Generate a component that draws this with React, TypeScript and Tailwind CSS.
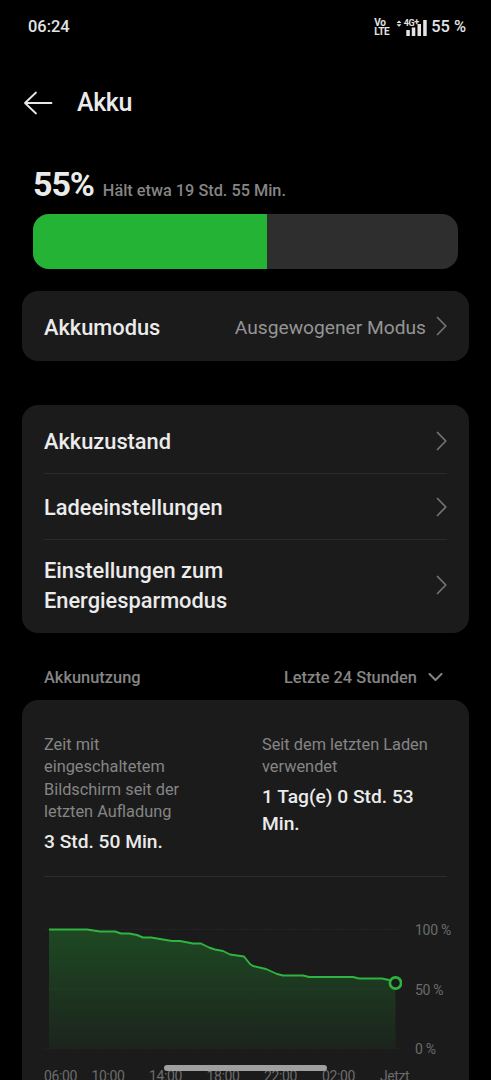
import clsx from 'clsx';

const settings = [
  { label: 'Akkuzustand', row: 'h-[69px] pt-[4px]' },
  { label: 'Ladeeinstellungen', row: 'h-[66px]' },
  { label: 'Einstellungen zum Energiesparmodus', row: 'h-[93px] pb-[3px]' },
];

const line =
  '5,29.5 43,29.5 56,31.5 71,31.5 77,33.5 85,33.5 93,35 99,37.5 107,37.5 128,41 136,41 149,43.5 157,43.5 165,47.5 171,49.5 179,51 186,54.5 200,56.5 206,64 209,66 222,69 233,74 239,75.5 259,75.5 265,77 309,77 315,78.5 338,78.5 345,80 351.5,83';

const times = [
  { label: '06:00', width: 'w-[47.5px]' },
  { label: '10:00', width: 'w-[57.5px]' },
  { label: '14:00', width: 'w-[57.5px]' },
  { label: '18:00', width: 'w-[57.5px]' },
  { label: '22:00', width: 'w-[58px]' },
  { label: '02:00', width: 'w-[58px]' },
  { label: 'Jetzt', width: 'w-[40px]' },
];

function Chevron() {
  return (
    <svg width="12" height="20" viewBox="0 0 12 20" fill="none" className="-mr-px shrink-0">
      <path d="M1.5 1.5 9.8 10 1.5 18.5" stroke="#747474" strokeWidth="1.7" strokeLinecap="round" strokeLinejoin="round" />
    </svg>
  );
}

function StatusBar() {
  return (
    <header className="flex h-[54px] items-center justify-between pt-px pr-[25px] pl-[28px] text-[16.4px] font-medium text-[#e4e4e4]">
      <span>06:24</span>
      <div className="flex items-center">
        <div className="mr-[7px] flex flex-col text-[10px] leading-[9px] font-bold tracking-[-0.4px]">
          <span>Vo</span>
          <span>LTE</span>
        </div>
        <div className="relative mr-[4px] h-[17px] w-[31px]">
          <svg width="31" height="17" viewBox="0 0 31 17" fill="#e4e4e4">
            <path d="M0.5 3.9 3 1.4 5.5 3.9zM0.5 5.3 3 7.8 5.5 5.3z" />
            <path d="M10.3 11h3.5v6h-3.5zM15.8 8.5h3.5v8.5h-3.5zM21.5 5h3.5v12h-3.5zM27.2 1h3.5v16h-3.5z" />
          </svg>
          <span className="absolute top-0 left-[7.5px] text-[9px] leading-[9px] font-bold tracking-[-0.5px]">4G</span>
          <span className="absolute -top-[1px] left-[18px] text-[9px] leading-[9px] font-bold">+</span>
        </div>
        <span>55 %</span>
      </div>
    </header>
  );
}

function UsageChart() {
  return (
    <div>
      <div className="flex">
        {/* Verlauf der letzten 24 Stunden */}
        <svg width="358" height="156" viewBox="0 0 358 156" fill="none" className="shrink-0">
          <defs>
            <linearGradient id="fill" x1="0" y1="29" x2="0" y2="148" gradientUnits="userSpaceOnUse">
              <stop stopColor="#25b435" stopOpacity="0.3" />
              <stop offset="1" stopColor="#25b435" stopOpacity="0.06" />
            </linearGradient>
          </defs>
          <path d="M-2 29.5H356M-2 89H356M-2 148.5H356" stroke="#242424" strokeDasharray="2 1" />
          <polygon points={`${line} 351.5,148 5,148`} fill="url(#fill)" />
          <polyline points={line} stroke="#2fb441" strokeWidth="1.9" strokeLinejoin="round" />
          <circle cx="351.5" cy="83" r="5.6" fill="#1b1b1b" stroke="#2cb53d" strokeWidth="2.7" />
        </svg>
        <div className="flex flex-col gap-[39.5px] pt-[20px] pl-[13px] text-[14px] leading-[20px] tracking-[-0.3px] whitespace-nowrap text-[#6c6c6c]">
          <span>100 %</span>
          <span>50 %</span>
          <span>0 %</span>
        </div>
      </div>
      <div className="mt-[7px] flex text-[14px] leading-[20px] tracking-[-0.4px] text-[#6c6c6c]">
        {times.map((time) => (
          <span key={time.label} className={clsx('shrink-0', time.width)}>
            {time.label}
          </span>
        ))}
      </div>
    </div>
  );
}

export default function App() {
  return (
    <div className="relative h-[1080px] w-[491px] overflow-hidden bg-black font-['Roboto',sans-serif] text-[#ebebeb]">
      <StatusBar />

      <div className="flex h-[97px] items-center gap-[24px] pl-[23px]">
        <svg width="30" height="24" viewBox="0 0 30 24" fill="none">
          <path d="M13 1.5 2 12 13 22.5M2 12H28.5" stroke="#e8e8e8" strokeWidth="1.8" strokeLinecap="round" strokeLinejoin="round" />
        </svg>
        <h1 className="pt-px text-[25px] font-medium tracking-[-0.4px]">Akku</h1>
      </div>

      <section className="px-[33px]">
        <div className="flex h-[63px] items-baseline gap-[9px] pt-[13px]">
          <span className="text-[34px] leading-[40px] font-bold tracking-[-1.1px]">55%</span>
          <span className="text-[16.3px] font-medium text-[#858585]">Hält etwa 19 Std. 55 Min.</span>
        </div>
        <div className="h-[55px] overflow-hidden rounded-[16px] bg-[#2e2e2e]">
          <div className="h-full bg-[#25b335]" style={{ width: '55%' }} />
        </div>
      </section>

      <main className="px-[22px] pt-[22px]">
        <div className="flex h-[70px] items-center rounded-[16px] bg-[#1b1b1b] px-[22px]">
          <span className="pt-[4px] text-[21.8px] font-medium">Akkumodus</span>
          <span className="mr-[10px] ml-auto pt-[4px] text-[19.2px] text-[#959595]">Ausgewogener Modus</span>
          <Chevron />
        </div>

        <div className="mt-[44px] h-[228px] divide-y divide-[#2a2a2a] rounded-[16px] bg-[#1b1b1b] px-[22px]">
          {settings.map((item) => (
            <div key={item.label} className={clsx('flex items-center justify-between', item.row)}>
              <span className="max-w-[210px] pt-[2px] text-[21.8px] leading-[30px] font-medium">{item.label}</span>
              <Chevron />
            </div>
          ))}
        </div>

        <div className="flex h-[67px] items-center justify-between pt-[24px] pr-[26px] pl-[22px] text-[16.4px] font-medium text-[#858585]">
          <span>Akkunutzung</span>
          <span className="flex items-center gap-[11px]">
            Letzte 24 Stunden
            <svg width="15" height="10" viewBox="0 0 15 10" fill="none">
              <path d="M1.5 1 7.5 7 13.5 1" stroke="#858585" strokeWidth="2" strokeLinecap="round" strokeLinejoin="round" />
            </svg>
          </span>
        </div>

        <div className="h-[400px] rounded-t-[16px] bg-[#1b1b1b] px-[22px]">
          <div className="flex h-[177px] border-b border-[#2c2c2c] pt-[33.5px]">
            <div className="w-[218px]">
              <p className="w-[150px] text-[16.35px] leading-[22.5px] text-[#858585]">
                Zeit mit eingeschaltetem Bildschirm seit der letzten Aufladung
              </p>
              <p className="mt-[4px] text-[19.2px] leading-[27.5px] font-medium">3 Std. 50 Min.</p>
            </div>
            <div className="w-[175px]">
              <p className="text-[16.35px] leading-[22.5px] text-[#858585]">Seit dem letzten Laden verwendet</p>
              <p className="mt-[4px] text-[19.2px] leading-[27.5px] font-medium">1 Tag(e) 0 Std. 53 Min.</p>
            </div>
          </div>
          <div className="pt-[23px]">
            <UsageChart />
          </div>
        </div>
      </main>

      {/* Gestenleiste */}
      <div className="absolute bottom-[9px] left-[164px] h-[6px] w-[163px] rounded-full bg-[#a0a0a0]" />
    </div>
  );
}
